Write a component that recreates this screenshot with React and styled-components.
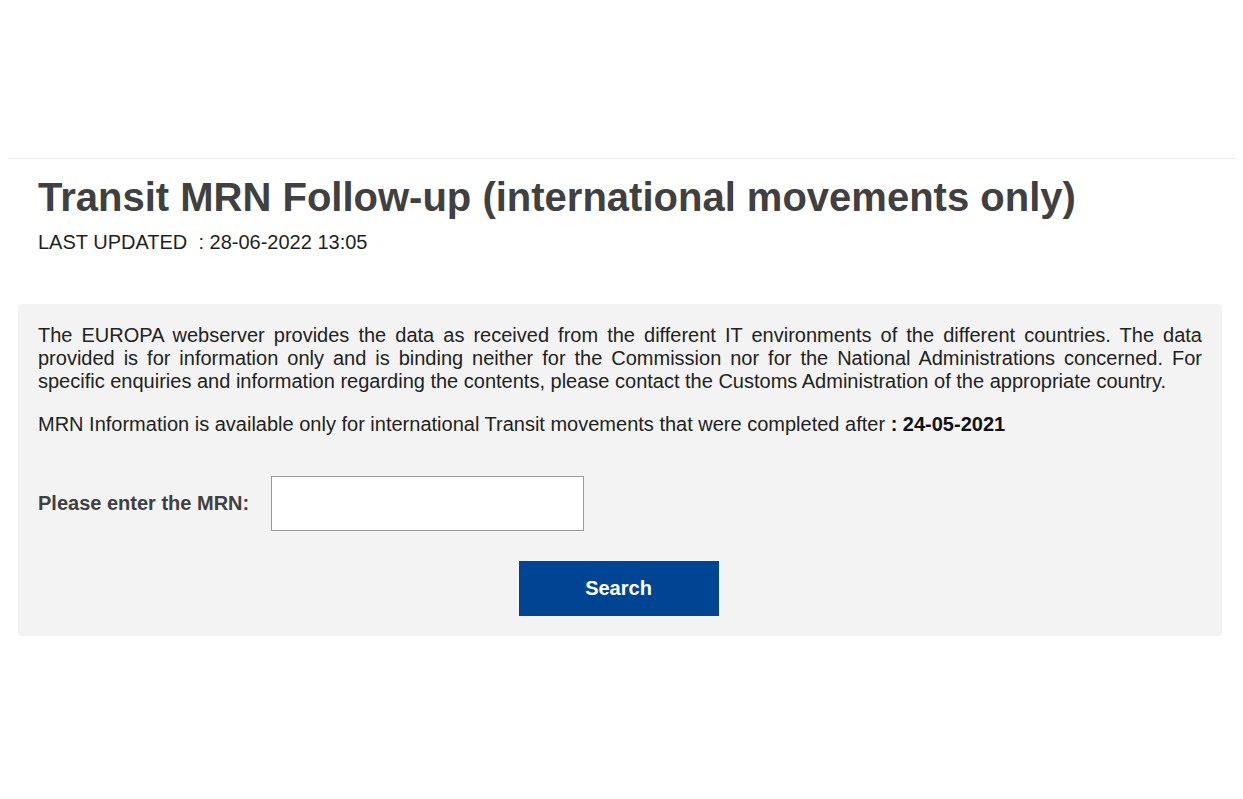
import React from "react";
import styled, { createGlobalStyle } from "styled-components";

const Global = createGlobalStyle`
  body {
    margin: 8px;
    background: #ffffff;
    font-family: "Liberation Sans", Arial, sans-serif;
    color: #222222;
  }
`;

const Page = styled.div`
  display: flex;
  flex-direction: column;
`;

const TopSpace = styled.div`
  height: 150px;
  border-bottom: 1px solid #ececec;
`;

const Header = styled.header`
  padding: 14px 30px 0 30px;
`;

const Title = styled.h1`
  margin: 0;
  font-size: 40px;
  line-height: 48px;
  font-weight: 700;
  color: #404040;
`;

const Updated = styled.div`
  margin-top: 9px;
  font-size: 20px;
  line-height: 24px;
  color: #1f1f1f;
  white-space: pre;
`;

const Panel = styled.section`
  margin: 50px 13px 0 10px;
  background: #f3f3f3;
  border-radius: 4px;
  padding: 20px 20px 20px 20px;
`;

const Para = styled.p`
  margin: 0 0 ${(p) => p.$gap || 0}px 0;
  font-size: 20px;
  line-height: 23px;
  text-align: ${(p) => (p.$justify ? "justify" : "left")};
  color: #222222;
`;

const Strong = styled.strong`
  color: #111111;
`;

const FormRow = styled.div`
  display: flex;
  align-items: center;
  gap: 22px;
  margin-top: 40px;
`;

const Label = styled.label`
  font-size: 20px;
  font-weight: 700;
  color: #404040;
`;

const Input = styled.input`
  box-sizing: border-box;
  width: 313px;
  height: 55px;
  border: 1px solid #9a9a9a;
  background: #ffffff;
  font-size: 20px;
  padding: 0 10px;
  outline: none;
`;

const ButtonRow = styled.div`
  display: flex;
  justify-content: center;
  margin-top: 30px;
  padding-right: 3px;
`;

const Button = styled.button`
  width: 200px;
  height: 55px;
  background: #004494;
  border: none;
  color: #ffffff;
  font-family: "Liberation Sans", Arial, sans-serif;
  font-size: 20px;
  font-weight: 700;
  cursor: pointer;
`;

export default function App() {
  return (
    <Page>
      <Global />
      <TopSpace />
      <Header>
        <Title>Transit MRN Follow-up (international movements only)</Title>
        <Updated>LAST UPDATED  : 28-06-2022 13:05</Updated>
      </Header>
      <Panel>
        <Para $justify $gap={20}>
          The EUROPA webserver provides the data as received from the different IT environments of the
          different countries. The data provided is for information only and is binding neither for the
          Commission nor for the National Administrations concerned. For specific enquiries and
          information regarding the contents, please contact the Customs Administration of the
          appropriate country.
        </Para>
        <Para>
          MRN Information is available only for international Transit movements that were completed after{" "}
          <Strong>: 24-05-2021</Strong>
        </Para>
        <FormRow>
          <Label htmlFor="mrn">Please enter the MRN:</Label>
          <Input id="mrn" type="text" />
        </FormRow>
        <ButtonRow>
          <Button type="button">Search</Button>
        </ButtonRow>
      </Panel>
    </Page>
  );
}
